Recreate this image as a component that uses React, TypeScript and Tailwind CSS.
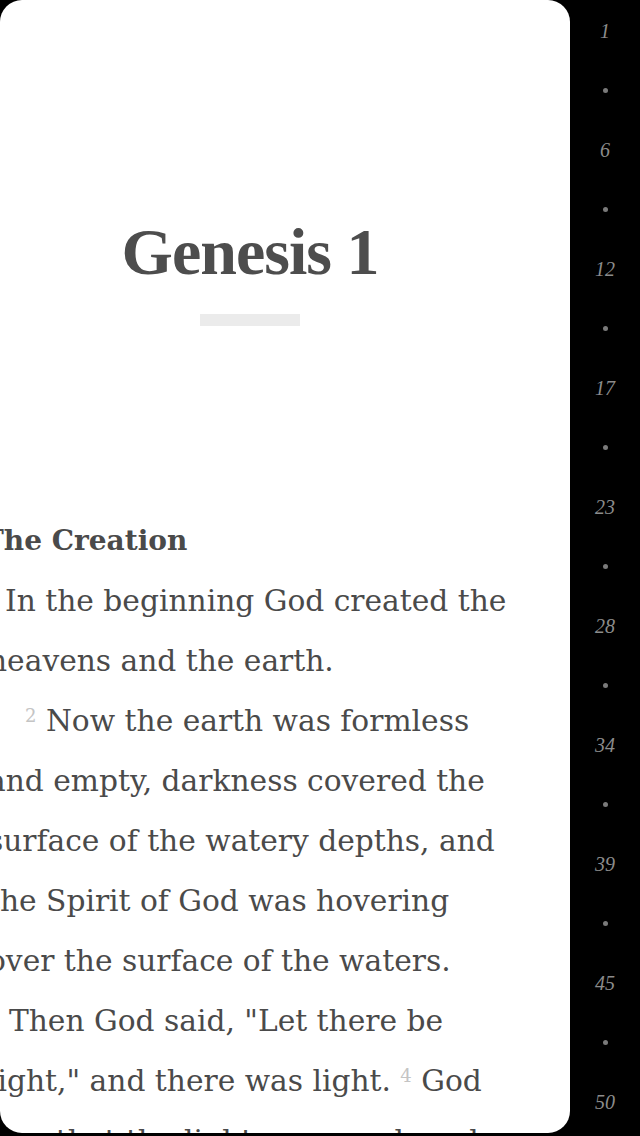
import React from "react";

const body = "font-['DejaVu_Serif',serif] text-[29.7px] leading-[60px] text-[#4a4a4a] whitespace-nowrap";
const sup = "text-[18px] text-[#c4c4c4] [vertical-align:9px] leading-none";

const marks: (string | null)[] = ["1", null, "6", null, "12", null, "17", null, "23", null, "28", null, "34", null, "39", null, "45", null, "50"];

export default function App() {
  return (
    <div className="w-[640px] h-[1136px] bg-black flex overflow-hidden">
      <div className="w-[570px] h-[1133px] bg-white rounded-[22px] overflow-hidden shrink-0">
        <div className="w-[524px] ml-[-12px] pt-[212px]">
          <h1 className="text-center font-['Liberation_Serif',serif] font-bold text-[66px] leading-[80px] tracking-[-1px] text-[#4d4d4d]">
            Genesis 1
          </h1>
          <div className="mx-auto mt-[22px] w-[100px] h-3 bg-[#ebebeb]" />
          <h2 className="mt-[185px] ml-[-5px] font-['DejaVu_Serif',serif] font-bold text-[28px] leading-[60px] text-[#4a4a4a] whitespace-nowrap">
            The Creation
          </h2>
          <div className={body + " pl-[17px]"}>In the beginning God created the</div>
          <div className={body}>heavens and the earth.</div>
          <div className={body + " pl-[37px]"}>
            <span className={sup}>2</span> Now the earth was formless
          </div>
          <div className={body}>and empty, darkness covered the</div>
          <div className={body}>surface of the watery depths, and</div>
          <div className={body}>the Spirit of God was hovering</div>
          <div className={body}>over the surface of the waters.</div>
          <div className={body}>
            <span className={sup}>3</span> Then God said, &quot;Let there be
          </div>
          <div className={body}>
            light,&quot; and there was light. <span className={sup}>4</span> God
          </div>
          <div className={body}>saw that the light was good, and</div>
        </div>
      </div>
      <div className="flex-1 flex flex-col pt-[1px]">
        {marks.map((m, i) => (
          <div key={i} className="h-[59.5px] shrink-0 flex items-center justify-center">
            {m ? (
              <span className="font-['Liberation_Serif',serif] italic text-[20px] leading-none text-[#8c8c8c]">{m}</span>
            ) : (
              <span className="block w-[5px] h-[5px] rounded-full bg-[#7a7a7a]" />
            )}
          </div>
        ))}
      </div>
    </div>
  );
}
